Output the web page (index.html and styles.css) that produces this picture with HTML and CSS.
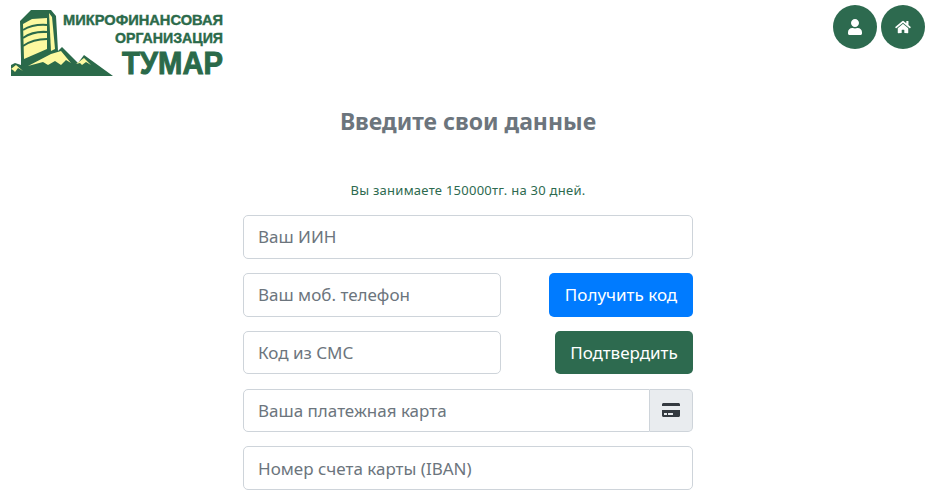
FILE: index.html
```html
<!DOCTYPE html>
<html lang="ru">
<head>
<meta charset="utf-8">
<title>Тумар</title>
<link rel="stylesheet" href="styles.css">
</head>
<body>
<div class="page">
  <header class="top">
    <svg class="logo" width="224" height="72" viewBox="0 0 224 72" aria-label="Микрофинансовая организация Тумар">
      <path fill="#2b6a4a" d="M9 11 L20 0 L40 0 L45 6 L47 41 L51 37 L67 53 L73 45 L102 66 L0 66 L0 55 L4 53 L10 55 L10 48 Z"/>
      <path fill="#fdf9a0" d="M12 14 L21 9 L36 8 L36 39 L13 49 Z"/>
      <path fill="#fdf9a0" d="M38 3 L41 7 L44 39 L40 41 Z"/>
      <path fill="#fdf9a0" d="M17 56 L40 44 L50 41 L60 53 L55 50 L50 55 L44 51 L37 55 L32 52 Z M65 54 L73 48 L80 55 L75 52 L71 55 L69 53 Z M0 59 L5 55 L12 61 L7 58 L4 62 L2 60 Z"/>
      <path fill="none" stroke="#2b6a4a" stroke-width="2" d="M12 20 Q22 14 36 15 M12 28 Q22 21 36 22 M12 36 Q22 29 36 29"/>
      <text class="logo-a" x="52" y="15" textLength="160" lengthAdjust="spacingAndGlyphs">МИКРОФИНАНСОВАЯ</text>
      <text class="logo-a" x="104" y="33" textLength="108" lengthAdjust="spacingAndGlyphs">ОРГАНИЗАЦИЯ</text>
      <text class="logo-b" x="111" y="64" textLength="101" lengthAdjust="spacingAndGlyphs">ТУМАР</text>
    </svg>
    <nav class="circles">
      <a class="circle" href="#" aria-label="Профиль">
        <svg width="14" height="16" viewBox="0 0 448 512"><path fill="#fff" d="M224 256c70.700 0 128-57.300 128-128S294.700 0 224 0 96 57.300 96 128s57.300 128 128 128zm89.600 32h-16.700c-22.200 10.200-46.900 16-72.900 16s-50.600-5.800-72.900-16h-16.700C60.200 288 0 348.200 0 422.400V464c0 26.500 21.500 48 48 48h352c26.500 0 48-21.500 48-48v-41.600c0-74.200-60.200-134.400-134.400-134.400z"/></svg>
      </a>
      <a class="circle" href="#" aria-label="Домой">
        <svg width="18" height="14" viewBox="0 0 576 512"><path fill="#fff" d="M280.400 148.300L96 300.100V464a16 16 0 0 0 16 16l112.100-.3a16 16 0 0 0 15.900-16V368a16 16 0 0 1 16-16h64a16 16 0 0 1 16 16v95.600a16 16 0 0 0 16 16.100L464 480a16 16 0 0 0 16-16V300L295.700 148.300a12.200 12.200 0 0 0-15.300 0zM571.600 251.500L488 182.600V44.100a12 12 0 0 0-12-12h-56a12 12 0 0 0-12 12v72.600L318.500 43a48 48 0 0 0-61 0L4.300 251.500a12 12 0 0 0-1.600 16.900l25.500 31A12 12 0 0 0 45.200 301l235.200-193.700a12.200 12.200 0 0 1 15.300 0L530.900 301a12 12 0 0 0 16.900-1.600l25.500-31a12 12 0 0 0-1.700-16.900z"/></svg>
      </a>
    </nav>
  </header>

  <h1 class="title">Введите свои данные</h1>
  <p class="note">Вы занимаете 150000тг. на 30 дней.</p>

  <form class="form">
    <input class="field" type="text" placeholder="Ваш ИИН">
    <div class="row">
      <input class="field field-half" type="text" placeholder="Ваш моб. телефон">
      <button class="btn btn-blue" type="button">Получить код</button>
    </div>
    <div class="row">
      <input class="field field-half" type="text" placeholder="Код из СМС">
      <button class="btn btn-green" type="button">Подтвердить</button>
    </div>
    <div class="group">
      <input class="field field-joined" type="text" placeholder="Ваша платежная карта">
      <span class="addon">
        <svg width="18" height="16" viewBox="0 0 576 512"><path fill="#343a40" d="M0 432c0 26.500 21.500 48 48 48h480c26.500 0 48-21.500 48-48V256H0v176zm192-68c0-6.600 5.400-12 12-12h136c6.600 0 12 5.400 12 12v40c0 6.600-5.400 12-12 12H204c-6.600 0-12-5.400-12-12v-40zm-128 0c0-6.600 5.400-12 12-12h72c6.600 0 12 5.400 12 12v40c0 6.600-5.400 12-12 12H76c-6.600 0-12-5.400-12-12v-40zM576 80v48H0V80c0-26.500 21.500-48 48-48h480c26.500 0 48 21.500 48 48z"/></svg>
      </span>
    </div>
    <input class="field" type="text" placeholder="Номер счета карты (IBAN)">
  </form>
</div>
</body>
</html>
```

FILE: styles.css
```css
html, body {
  margin: 0;
  padding: 0;
  height: 497px;
  overflow: hidden;
  background: #fff;
}
body {
  font-family: "Noto Sans", "Open Sans", "Liberation Sans", sans-serif;
  color: #212529;
}
.page {
  width: 936px;
}
.top {
  display: flex;
  justify-content: space-between;
  align-items: flex-start;
  padding: 5px 11px 0 11px;
}
.logo {
  display: block;
  margin-top: 5px;
}
.logo-a {
  font-family: "Liberation Sans", sans-serif;
  font-weight: 700;
  font-size: 14px;
  fill: #2b6a4a;
  stroke: #2b6a4a;
  stroke-width: 0.4px;
}
.logo-b {
  font-family: "Liberation Sans", sans-serif;
  font-weight: 700;
  font-size: 32px;
  fill: #2b6a4a;
  stroke: #2b6a4a;
  stroke-width: 1px;
}
.circles {
  display: flex;
  gap: 4px;
}
.circle {
  width: 44px;
  height: 44px;
  border-radius: 50%;
  background: #2d6a4f;
  display: flex;
  align-items: center;
  justify-content: center;
}
.title {
  margin: 23px 0 0;
  font-size: 23px;
  line-height: 32px;
  font-weight: 700;
  color: #6c757d;
  text-align: center;
}
.note {
  margin: 44px 0 0;
  font-size: 13px;
  line-height: 18px;
  color: #2d6a4f;
  text-align: center;
  letter-spacing: 0.26px;
}
.form {
  width: 450px;
  margin: 16px auto 0;
  display: flex;
  flex-direction: column;
  gap: 14.05px;
}
.field {
  box-sizing: border-box;
  height: 43.8px;
  width: 100%;
  padding: 0 14px;
  font: 400 17px "Noto Sans", "Open Sans", sans-serif;
  color: #495057;
  background: #fff;
  border: 1px solid #ced4da;
  border-radius: 5px;
  outline: none;
}
.field::placeholder {
  color: #6c757d;
  opacity: 1;
}
.row {
  display: flex;
  justify-content: space-between;
}
.field-half {
  width: 258px;
}
.btn {
  box-sizing: border-box;
  height: 43.8px;
  padding: 0;
  font: 400 17px "Noto Sans", "Open Sans", sans-serif;
  color: #fff;
  border: 0;
  border-radius: 5px;
}
.btn-blue {
  background: #007bff;
  width: 144px;
}
.btn-green {
  background: #2d6a4f;
  width: 138px;
}
.group {
  display: flex;
}
.field-joined {
  flex: 1;
  min-width: 0;
  border-radius: 5px 0 0 5px;
}
.addon {
  box-sizing: border-box;
  width: 43px;
  height: 43.8px;
  display: flex;
  align-items: center;
  justify-content: center;
  background: #e9ecef;
  border: 1px solid #ced4da;
  border-left: 0;
  border-radius: 0 5px 5px 0;
}
```
